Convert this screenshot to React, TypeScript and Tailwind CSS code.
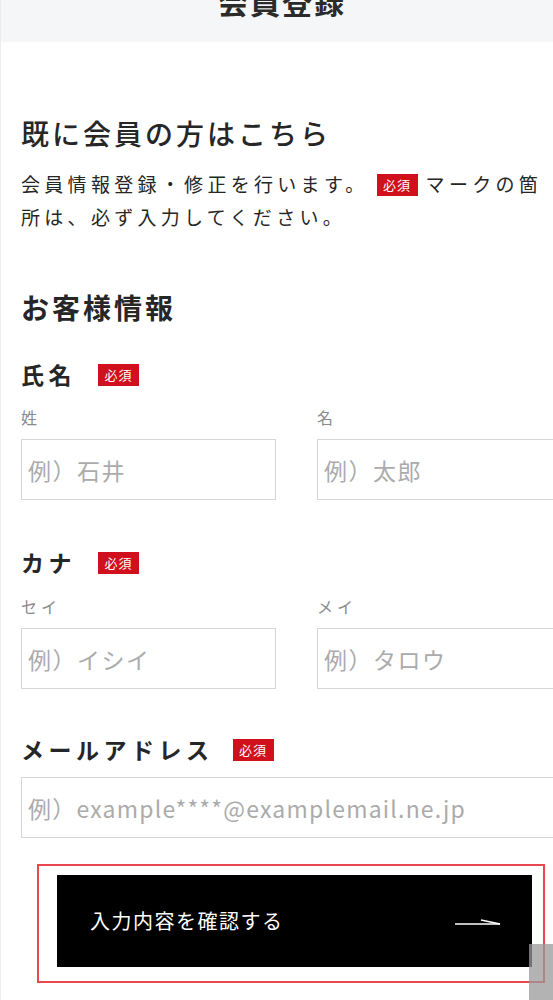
import React from "react";

const font = { fontFamily: '"Noto Sans CJK JP", "Noto Sans", sans-serif' };

function Badge({ className = "" }: { className?: string }) {
  return (
    <span
      className={`inline-flex items-center justify-center w-[41px] h-[22px] bg-[#d0101c] text-white text-[13px] leading-none tracking-[1px] ${className}`}
    >
      必須
    </span>
  );
}

function Field({
  placeholder,
  width,
  tracking = "tracking-[1.5px]",
}: {
  placeholder: string;
  width: string;
  tracking?: string;
}) {
  return (
    <input
      readOnly
      placeholder={placeholder}
      className={`${width} ${tracking} h-[61px] border border-[#d6d6d6] bg-white pl-[6px] text-[23px] text-[#333] placeholder:text-[#ababab] outline-none`}
      style={font}
    />
  );
}

export default function App() {
  return (
    <div
      className="relative w-[553px] h-[1000px] overflow-hidden bg-white text-[#262626] border-l border-[#ededed]"
      style={font}
    >
      <header className="h-[42px] bg-[#f5f6f8] overflow-hidden flex justify-center">
        <div className="-mt-[14px] pl-[10px] text-[30px] leading-none font-bold tracking-[2px] text-[#2b2b2b]">
          会員登録
        </div>
      </header>

      <main className="pl-[20px]">
        <h2 className="mt-[77px] text-[28px] leading-none font-medium tracking-[3px]">
          既に会員の方はこちら
        </h2>
        <p className="mt-[20px] text-[19px] leading-[33px] tracking-[4.3px] whitespace-nowrap">
          会員情報登録・修正を行います。
          <Badge className="ml-[8px] mr-[8px] align-[2px] tracking-[1px]" />
          マークの箇
          <br />
          所は、必ず入力してください。
        </p>

        <h3 className="mt-[60px] text-[28px] leading-none font-bold tracking-[3px]">
          お客様情報
        </h3>

        <div className="mt-[42px] flex items-center">
          <span className="text-[23px] leading-none font-bold tracking-[4.5px] w-[77px]">氏名</span>
          <Badge />
        </div>
        <div className="mt-[23px] flex gap-[41px]">
          <div className="flex flex-col">
            <span className="text-[16px] leading-none tracking-[4px] text-[#8a8a8a]">姓</span>
            <div className="mt-[14px]">
              <Field placeholder="例）石井" width="w-[255px]" />
            </div>
          </div>
          <div className="flex flex-col">
            <span className="text-[16px] leading-none tracking-[4px] text-[#8a8a8a]">名</span>
            <div className="mt-[14px]">
              <Field placeholder="例）太郎" width="w-[255px]" />
            </div>
          </div>
        </div>

        <div className="mt-[51px] flex items-center">
          <span className="text-[23px] leading-none font-bold tracking-[4.5px] w-[77px]">カナ</span>
          <Badge />
        </div>
        <div className="mt-[24px] flex gap-[41px]">
          <div className="flex flex-col">
            <span className="text-[16px] leading-none tracking-[4px] text-[#8a8a8a]">セイ</span>
            <div className="mt-[14px]">
              <Field placeholder="例）イシイ" width="w-[255px]" />
            </div>
          </div>
          <div className="flex flex-col">
            <span className="text-[16px] leading-none tracking-[4px] text-[#8a8a8a]">メイ</span>
            <div className="mt-[14px]">
              <Field placeholder="例）タロウ" width="w-[255px]" />
            </div>
          </div>
        </div>

        <div className="mt-[49px] flex items-center">
          <span className="text-[23px] leading-none font-bold tracking-[4.5px]">メールアドレス</span>
          <Badge className="ml-[19px]" />
        </div>
        <div className="mt-[16px]">
          <Field
            placeholder="例）example****@examplemail.ne.jp"
            width="w-[551px]"
            tracking="tracking-[1.2px]"
          />
        </div>

        <div className="mt-[26px] ml-[16px] w-[508px] border-2 border-[#e8474f] pl-[18px] pt-[9px] pb-[14px] pr-[11px]">
          <button className="w-[475px] h-[92px] bg-black text-white flex items-center justify-between pl-[33px] pr-[30px]">
            <span className="text-[20px] leading-none tracking-[1.5px]">入力内容を確認する</span>
            <svg width="48" height="10" viewBox="0 0 48 10" fill="none">
              <path d="M1 8 H46" stroke="#fff" strokeWidth="1.6" />
              <path d="M27 4 L46 8" stroke="#fff" strokeWidth="1.6" />
            </svg>
          </button>
        </div>
      </main>

      <div className="absolute right-0 bottom-0 w-[24px] h-[56px] bg-[#9a9a9a]/75" />
    </div>
  );
}
